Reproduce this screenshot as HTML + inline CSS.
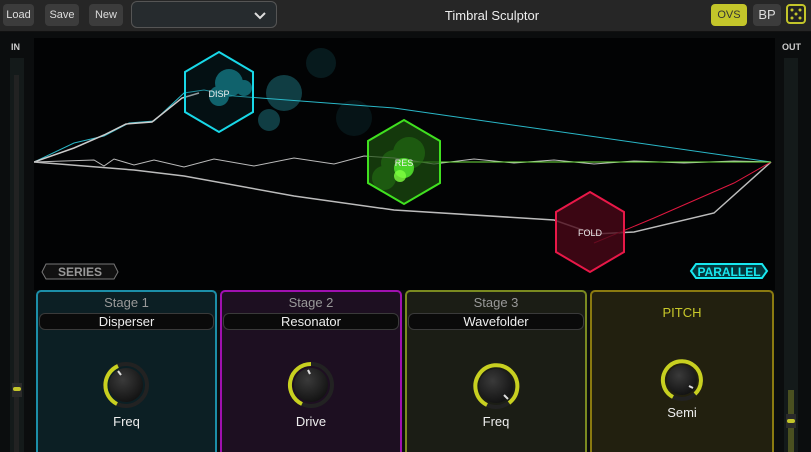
<!DOCTYPE html>
<html style="width:811px;height:452px;overflow:hidden"><head><style>
body{margin:0;width:811px;height:452px;background:#0b0d0e;overflow:hidden;font-family:"Liberation Sans",sans-serif;position:relative}
.top{position:absolute;left:0;top:0;width:811px;height:31px;background:#262626;border-bottom:1px solid #111}
.btn{position:absolute;top:4px;height:22px;background:#3c3c3c;border-radius:4px;color:#ddd;font-size:11px;line-height:22px;text-align:center}
.p{position:absolute;top:290px;height:175px;box-sizing:border-box;border:2px solid;border-radius:5px}
.st{position:absolute;top:3px;width:100%;text-align:center;color:#999;font-size:13px}
.dd{position:absolute;left:1px;right:1px;top:21px;height:15px;background:#0a0a0a;border:1px solid #3a3a3a;border-radius:6px;color:#eee;font-size:13px;text-align:center;line-height:15px}
.lbl{position:absolute;width:100%;text-align:center;color:#eee;font-size:13px}
</style></head><body>
<div class="top">
<div class="btn" style="left:3px;width:31px">Load</div>
<div class="btn" style="left:45px;width:34px">Save</div>
<div class="btn" style="left:89px;width:34px">New</div>
<div style="position:absolute;left:131px;top:1px;width:146px;height:27px;border:1px solid #555;border-radius:6px;background:#262b2e;box-sizing:border-box"><svg width="14" height="10" style="position:absolute;left:121px;top:9px"><path d="M2 2 L7 7 L12 2" stroke="#ddd" stroke-width="2" fill="none"/></svg></div>
<div style="position:absolute;left:380px;width:224px;top:8px;text-align:center;color:#eee;font-size:13px">Timbral Sculptor</div>
<div class="btn" style="left:711px;width:36px;background:#c3c52a;color:#333">OVS</div>
<div class="btn" style="left:753px;width:28px;font-size:13px">BP</div>
<div style="position:absolute;left:786px;top:4px;width:20px;height:20px;border:2px solid #c3c52a;border-radius:4px;box-sizing:border-box;background:#222"><svg width="16" height="16"><g fill="#c3c52a"><circle cx="4" cy="4" r="1.5"/><circle cx="12" cy="4" r="1.5"/><circle cx="8" cy="8" r="1.5"/><circle cx="4" cy="12" r="1.5"/><circle cx="12" cy="12" r="1.5"/></g></svg></div>
</div>
<div style="position:absolute;left:11px;top:42px;color:#ccc;font-size:9px;font-weight:bold">IN</div>
<div style="position:absolute;left:782px;top:42px;color:#ccc;font-size:9px;font-weight:bold">OUT</div>
<div style="position:absolute;left:10px;top:58px;width:14px;height:394px;background:#141a1a"></div>
<div style="position:absolute;left:14px;top:75px;width:5px;height:377px;background:#222"></div>
<div style="position:absolute;left:12px;top:383px;width:10px;height:14px;background:#2a2a2a"><div style="margin:4px 1px;height:4px;background:#c3c52a;border-radius:2px"></div></div>
<div style="position:absolute;left:784px;top:58px;width:14px;height:394px;background:#141a1a"></div>
<div style="position:absolute;left:788px;top:390px;width:6px;height:62px;background:#4a5020"></div>
<div style="position:absolute;left:786px;top:414px;width:10px;height:14px;background:#2a2a2a"><div style="margin:5px 1px;height:4px;background:#c3c52a;border-radius:2px"></div></div>
<svg style="position:absolute;left:34px;top:38px" width="741" height="252">
<rect width="741" height="252" fill="#020304"/>
<g fill="#2aa8b8" opacity="0.35"><circle cx="287" cy="25" r="15" opacity=".4"/><circle cx="250" cy="55" r="18"/><circle cx="235" cy="82" r="11"/><circle cx="255" cy="57" r="9"/><circle cx="320" cy="80" r="18" opacity=".3"/></g>
<g fill="#20c8d8" opacity="0.6"><circle cx="195" cy="45" r="14"/><circle cx="185" cy="58" r="10"/><circle cx="210" cy="50" r="8"/></g>
<g fill="#3ad020" opacity="0.55"><circle cx="375" cy="115" r="16"/><circle cx="360" cy="125" r="13"/><circle cx="350" cy="140" r="12"/><circle cx="370" cy="132" r="8"/></g>
<polyline points="0,124 40,105 70,98 95,85 120,83 150,55 170,52 200,58 360,70 737,124" fill="none" stroke="#2ab8c8" stroke-width="1"/>
<polyline points="0,124 40,110 70,97 92,86 118,84 148,60 165,55" fill="none" stroke="#ccc" stroke-width="1.5"/>
<polyline points="0,124 100,132 150,138 260,158 360,172 520,182 560,196 600,194 680,175 737,124" fill="none" stroke="#ddd" stroke-width="1.5" opacity=".85"/>
<polyline points="560,205 620,180 700,145 737,124" fill="none" stroke="#e01840" stroke-width="1"/>
<path d="M0 124 L60 122 L70 128 L80 121 L100 127 L120 122 L150 129 L180 121 L220 128 L260 120 L300 126 L330 118 L360 120 L400 126 L440 121 L480 125 L520 122 L560 126 L600 123 L650 125 L700 123 L737 124" fill="none" stroke="#bbb" stroke-width="1"/>
<path d="M360 124 L737 124" stroke="#70e040" stroke-width="1"/>
<polygon points="185,14 219,34 219,74 185,94 151,74 151,34" fill="#0a3038" fill-opacity=".3" stroke="#18d8e8" stroke-width="2"/>
<text x="185" y="59" fill="#eee" font-size="9" text-anchor="middle">DISP</text>
<polygon points="370,82 406,103 406,145 370,166 334,145 334,103" fill="#1c5010" fill-opacity=".7" stroke="#40e020" stroke-width="2"/>
<circle cx="370" cy="130" r="10" fill="#58f030" opacity=".8"/><circle cx="366" cy="138" r="6" fill="#80ff40" opacity=".8"/>
<text x="370" y="128" fill="#eee" font-size="9" text-anchor="middle">RES</text>
<polygon points="556,154 590,174 590,214 556,234 522,214 522,174" fill="#4a0818" fill-opacity=".8" stroke="#e81848" stroke-width="2"/>
<text x="556" y="198" fill="#eee" font-size="9" text-anchor="middle">FOLD</text>
<polygon points="12,226 80,226 84,234 80,241 12,241 8,234" fill="#111" stroke="#777" stroke-width="1"/>
<text x="46" y="238" fill="#999" font-size="12" font-weight="bold" text-anchor="middle">SERIES</text>
<polygon points="662,226 728,226 733,233 728,240 662,240 657,233" fill="#03363c" stroke="#18e8f0" stroke-width="2"/>
<text x="695" y="238" fill="#18e8f0" font-size="12" font-weight="bold" text-anchor="middle">PARALLEL</text>
</svg>
<div class="p" style="left:36px;width:181px;background:#0c1f24;border-color:#1c8ea8"><div class="st">Stage 1</div><div class="dd">Disperser</div><div class="lbl" style="top:122px">Freq</div></div>
<div class="p" style="left:220px;width:182px;background:#1d0f21;border-color:#a010b0"><div class="st">Stage 2</div><div class="dd">Resonator</div><div class="lbl" style="top:122px">Drive</div></div>
<div class="p" style="left:405px;width:182px;background:#1b1d15;border-color:#7a8a20"><div class="st">Stage 3</div><div class="dd">Wavefolder</div><div class="lbl" style="top:122px">Freq</div></div>
<div class="p" style="left:590px;width:184px;background:#22200f;border-color:#8a7a10"><div class="st" style="color:#c8c82a;top:13px">PITCH</div><div class="lbl" style="top:113px">Semi</div></div>
<svg style="position:absolute;left:0;top:0" width="811" height="452">
<defs><radialGradient id="k" cx=".4" cy=".35" r=".7"><stop offset="0" stop-color="#3a3a3a"/><stop offset="1" stop-color="#111"/></radialGradient></defs>
<g transform="translate(126,385)"><circle r="21" fill="none" stroke="#222" stroke-width="4"/><path d="M-9 19 A21 21 0 0 1 -8 -19" fill="none" stroke="#c8d020" stroke-width="4"/><circle r="17" fill="url(#k)"/><line x1="-5" y1="-10" x2="-8" y2="-14" stroke="#ddd" stroke-width="2"/></g>
<g transform="translate(311,385)"><circle r="21" fill="none" stroke="#222" stroke-width="4"/><path d="M-9 19 A21 21 0 0 1 0 -21" fill="none" stroke="#c8d020" stroke-width="4"/><circle r="17" fill="url(#k)"/><line x1="-1" y1="-11" x2="-3" y2="-15" stroke="#ddd" stroke-width="2"/></g>
<g transform="translate(496,386)"><circle r="21" fill="none" stroke="#222" stroke-width="4"/><path d="M-9 19 A21 21 0 1 1 13 17" fill="none" stroke="#c8d020" stroke-width="4"/><circle r="17" fill="url(#k)"/><line x1="8" y1="9" x2="12" y2="13" stroke="#ddd" stroke-width="2"/></g>
<g transform="translate(682,380)"><circle r="19" fill="none" stroke="#222" stroke-width="4"/><path d="M-9 17 A19 19 0 1 1 13 14" fill="none" stroke="#c8d020" stroke-width="4"/><circle r="15" fill="url(#k)"/><line x1="7" y1="6" x2="11" y2="8" stroke="#ddd" stroke-width="2"/></g>
</svg>
</body></html>
